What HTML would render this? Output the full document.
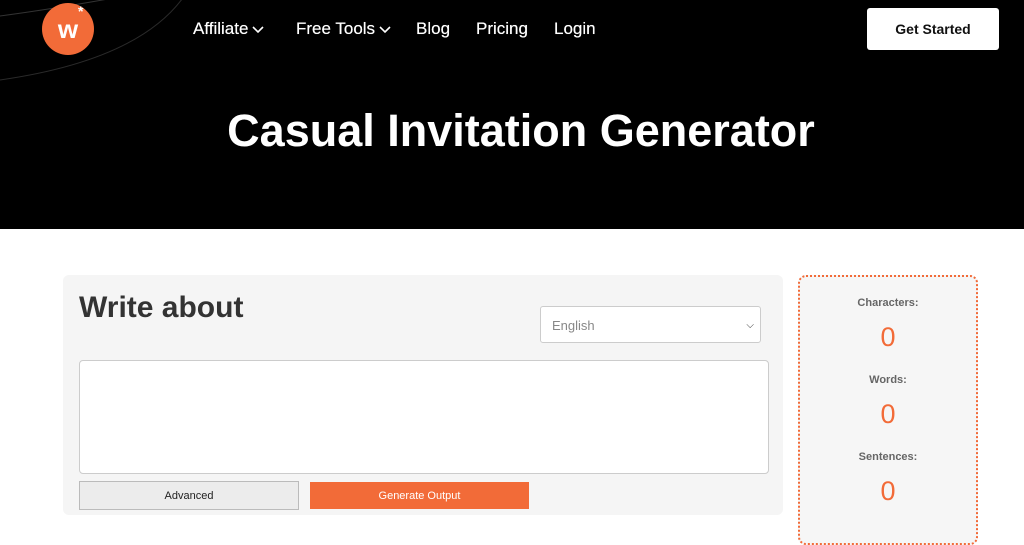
<!DOCTYPE html>
<html><head><style>
body{margin:0;width:1024px;height:515px;overflow:hidden;background:#fff;font-family:"Liberation Sans",sans-serif;position:relative}
.hero{position:absolute;left:0;top:0;width:1024px;height:229px;background:#000;overflow:hidden}
.logo{position:absolute;left:42px;top:3px;width:52px;height:52px;border-radius:50%;background:#f26b38;color:#fff;font-weight:bold;font-size:26px;text-align:center;line-height:52px}
.nav{position:absolute;top:19px;color:#fff;font-size:17px;text-shadow:0 0 0.4px #fff}
.nav svg{vertical-align:middle;margin-left:4px}
.btn{position:absolute;left:867px;top:8px;width:132px;height:42px;background:#fff;border-radius:3px;color:#111;font-weight:bold;font-size:14px;text-align:center;line-height:42px}
h1{position:absolute;left:0;width:1042px;text-align:center;top:105px;margin:0;color:#fff;font-size:45px;font-weight:bold}
.panel{position:absolute;left:63px;top:275px;width:720px;height:240px;background:#f5f5f5;border-radius:6px}
.side{position:absolute;left:798px;top:275px;width:180px;height:270px;background:#f6f6f6;border:2px dotted #f26b38;border-radius:8px;box-sizing:border-box;text-align:center}
.lbl{color:#666;font-weight:bold;font-size:11px;position:absolute;width:100%}
.num{color:#f26b38;font-size:27px;position:absolute;width:100%}
</style></head><body>
<div class="hero">
<svg width="1024" height="229" style="position:absolute;left:0;top:0"><path d="M0 16 Q60 8 130 -5" stroke="#333" fill="none"/><path d="M0 80 Q140 60 185 -5" stroke="#2a2a2a" fill="none"/></svg>
<div class="logo">w<span style="position:absolute;left:36px;top:-18px;font-size:14px">*</span></div>
<div class="nav" style="left:193px">Affiliate<svg width="12" height="8"><path d="M1 1l5 5 5-5" stroke="#fff" stroke-width="1.6" fill="none"/></svg></div>
<div class="nav" style="left:296px">Free Tools<svg width="12" height="8"><path d="M1 1l5 5 5-5" stroke="#fff" stroke-width="1.6" fill="none"/></svg></div>
<div class="nav" style="left:416px">Blog</div>
<div class="nav" style="left:476px">Pricing</div>
<div class="nav" style="left:554px">Login</div>
<div class="btn">Get Started</div>
<h1>Casual Invitation Generator</h1>
</div>
<div class="panel">
<div style="position:absolute;left:16px;top:16px;font-size:30px;font-weight:bold;color:#333">Write about</div>
<div style="position:absolute;left:477px;top:31px;width:221px;height:37px;background:#fff;border:1px solid #ccc;border-radius:3px;color:#888;font-size:13px;line-height:37px;padding-left:11px;box-sizing:border-box">English<span style="position:absolute;right:6px;font-size:10px;color:#333">⌵</span></div>
<div style="position:absolute;left:16px;top:85px;width:688px;height:112px;background:#fff;border:1px solid #ccc;border-radius:4px"></div>
<div style="position:absolute;left:16px;top:206px;width:218px;height:27px;background:#ececec;border:1px solid #bbb;font-size:11px;text-align:center;line-height:28px;color:#222">Advanced</div>
<div style="position:absolute;left:247px;top:207px;width:219px;height:27px;background:#f26b38;font-size:11px;text-align:center;line-height:28px;color:#fff">Generate Output</div>
</div>
<div class="side">
<div class="lbl" style="top:20px">Characters:</div><div class="num" style="top:45px">0</div>
<div class="lbl" style="top:97px">Words:</div><div class="num" style="top:122px">0</div>
<div class="lbl" style="top:174px">Sentences:</div><div class="num" style="top:199px">0</div>
</div>
</body></html>
